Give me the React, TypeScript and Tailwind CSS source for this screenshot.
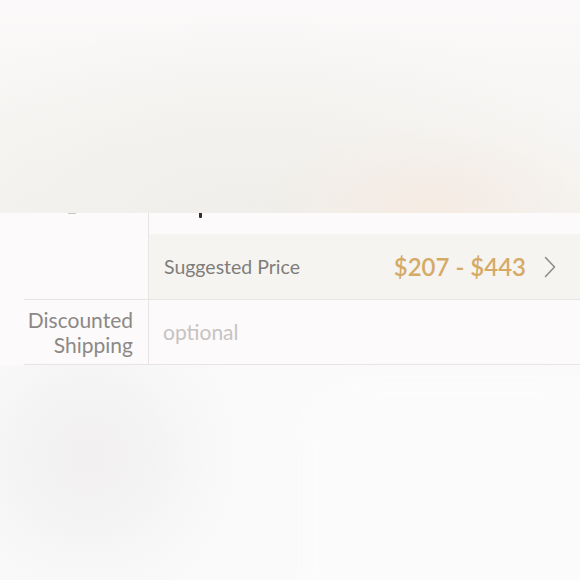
import React from 'react';

function Chevron() {
  return (
    <svg width="12" height="22" viewBox="0 0 12 22" fill="none" className="shrink-0">
      <polyline points="1.5,1.5 10.5,11 1.5,20.5" stroke="#8b8987" strokeWidth="1.5" strokeLinecap="round" strokeLinejoin="round" />
    </svg>
  );
}

export default function App() {
  return (
    <div className="w-[580px] h-[580px] overflow-hidden bg-[#fbf9f9] flex flex-col font-['Lato','Open_Sans',sans-serif]">
      {/* blurred sheet above */}
      <div className="h-[213px] shrink-0 bg-[radial-gradient(ellipse_170px_80px_at_430px_205px,#f5ebe3_0%,rgba(245,235,227,0)_100%),radial-gradient(ellipse_400px_210px_at_250px_225px,#efeeea_0%,rgba(240,239,235,0.6)_50%,rgba(251,249,249,0)_100%),linear-gradient(to_bottom,#fbf9f9,#f6f4f1)]" />

      {/* form rows */}
      <div className="flex flex-col bg-[#fcfafa]">
        <div className="flex ml-6 border-b border-[#e7e4e2]">
          <div className="w-[125px] shrink-0 border-r border-[#e7e4e2] relative">
            <div className="absolute left-[44px] top-0 w-[8px] h-[1px] bg-[#c8c6c4]" />
          </div>
          <div className="flex-1 flex flex-col">
            <div className="h-[21px] relative">
              <div className="absolute left-[50px] top-0 w-[3px] h-[5px] rounded-b-[1px] bg-[#3b2a2c]" />
            </div>
            <div className="h-[65px] bg-[#f5f4f0] flex items-center pl-[15px] pr-[24px]">
              <span className="text-[19.5px] text-[#7f7d7b]">Suggested Price</span>
              <span className="ml-auto text-[24px] font-semibold text-[#d5aa66]">$207 - $443</span>
              <span className="ml-[18px]">
                <Chevron />
              </span>
            </div>
          </div>
        </div>
        <div className="flex ml-6 border-b border-[#e7e4e2] h-[65px]">
          <div className="w-[125px] shrink-0 border-r border-[#e7e4e2] flex flex-col justify-center items-end pr-[15px] text-[21px] leading-[25px] text-[#8b8987]">
            <span>Discounted</span>
            <span>Shipping</span>
          </div>
          <div className="flex-1 flex items-center pl-[14px]">
            <span className="text-[21px] text-[#c6c3c1]">optional</span>
          </div>
        </div>
      </div>

      {/* blurred sheet below */}
      <div className="flex-1 relative bg-[radial-gradient(circle_at_88px_92px,#f2f0f0_0px,#f4f3f3_60px,#f9f8f8_120px,#fbfafa_170px)]">
        <div className="absolute left-[300px] top-[14px] w-[320px] h-[260px] rounded-[60px] bg-[#fcfbfb] blur-[10px]" />
      </div>
    </div>
  );
}
